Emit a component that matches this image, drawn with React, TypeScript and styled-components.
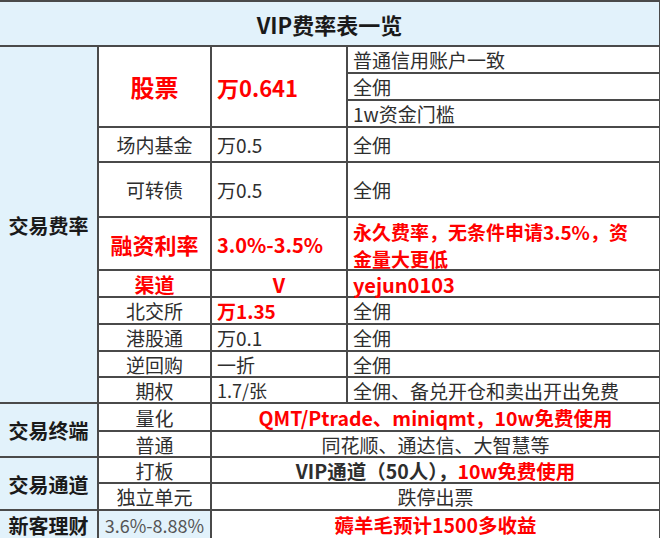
import styled, { createGlobalStyle } from "styled-components";

const GlobalStyle = createGlobalStyle`
  html, body {
    margin: 0;
    padding: 0;
    background: #ffffff;
  }
  body {
    font-family: "Noto Sans CJK SC", "Noto Sans", sans-serif;
  }
`;

const BLUE = "#e2f2fb";
const RED = "#ff0000";
const INK = "#2e2e2e";

const Table = styled.div`
  width: 659px;
  display: grid;
  grid-template-columns: 97px 111px 134px 1fr;
  grid-template-rows: 43px 25px 25px 25px 33px 53px 51px 25px 25px 25px 24px 24px 26px 24px 24px 25px 27px;
  gap: 2px;
  background: #4a4a4a;
  border-top: 2px solid #4a4a4a;
  border-right: 2px solid #4a4a4a;
`;

type Align = "left" | "center";

const Cell = styled.div<{
  $align?: Align;
  $blue?: boolean;
  $red?: boolean;
  $bold?: boolean;
  $size?: number;
  $muted?: boolean;
}>`
  display: flex;
  align-items: center;
  justify-content: ${(p) => (p.$align === "left" ? "flex-start" : "center")};
  padding: ${(p) => (p.$align === "left" ? "2px 0 0 5px" : "2px 0 0 0")};
  background: ${(p) => (p.$blue ? BLUE : "#ffffff")};
  color: ${(p) => (p.$red ? RED : p.$muted ? "#555555" : INK)};
  font-weight: ${(p) => (p.$bold ? 700 : 400)};
  font-size: ${(p) => p.$size ?? 19}px;
  line-height: 1.2;
  white-space: nowrap;
  overflow: visible;
`;

const Title = styled(Cell)`
  grid-column: 1 / -1;
  font-size: 22px;
  font-weight: 700;
  color: #1a1a1a;
`;

const Section = styled(Cell)<{ $rows: string }>`
  grid-column: 1;
  grid-row: ${(p) => p.$rows};
  font-size: 20px;
  font-weight: 700;
  color: #1a1a1a;
`;

const Wide = styled(Cell)`
  grid-column: 3 / 5;
  font-size: ${(p) => (p.$bold ? 19.5 : p.$size ?? 19)}px;
`;

const LastWide = styled(Wide)`
  padding: 0;
  line-height: 1;
`;

const Wrapped = styled(Cell)`
  white-space: normal;
  line-height: 27px;
`;

const Red = styled.span`
  color: ${RED};
`;

export default function App() {
  return (
    <>
      <GlobalStyle />
      <Table>
        <Title $blue>VIP费率表一览</Title>

        <Section $blue $rows="2 / 13">交易费率</Section>
        <Cell style={{ gridRow: "2 / 5" }} $red $bold $size={24}>
          股票
        </Cell>
        <Cell style={{ gridRow: "2 / 5" }} $align="left" $red $bold $size={22}>
          万0.641
        </Cell>
        <Cell $align="left">普通信用账户一致</Cell>
        <Cell $align="left">全佣</Cell>
        <Cell $align="left">1w资金门槛</Cell>

        <Cell>场内基金</Cell>
        <Cell $align="left">万0.5</Cell>
        <Cell $align="left">全佣</Cell>

        <Cell>可转债</Cell>
        <Cell $align="left">万0.5</Cell>
        <Cell $align="left">全佣</Cell>

        <Cell $red $bold $size={22}>
          融资利率
        </Cell>
        <Cell $align="left" $red $bold $size={20}>
          3.0%-3.5%
        </Cell>
        <Wrapped $align="left" $red $bold>
          永久费率，无条件申请3.5%，资
          <br />
          金量大更低
        </Wrapped>

        <Cell $red $bold $size={20}>
          渠道
        </Cell>
        <Cell $red $bold $size={20}>
          V
        </Cell>
        <Cell $align="left" $red $bold $size={20}>
          yejun0103
        </Cell>

        <Cell>北交所</Cell>
        <Cell $align="left" $red $bold>
          万1.35
        </Cell>
        <Cell $align="left">全佣</Cell>

        <Cell>港股通</Cell>
        <Cell $align="left">万0.1</Cell>
        <Cell $align="left">全佣</Cell>

        <Cell>逆回购</Cell>
        <Cell $align="left">一折</Cell>
        <Cell $align="left">全佣</Cell>

        <Cell>期权</Cell>
        <Cell $align="left" $size={18}>
          1.7/张
        </Cell>
        <Cell $align="left">全佣、备兑开仓和卖出开出免费</Cell>

        <Section $blue $rows="13 / 15">交易终端</Section>
        <Cell>量化</Cell>
        <Wide $red $bold>
          QMT/Ptrade、miniqmt，10w免费使用
        </Wide>
        <Cell>普通</Cell>
        <Wide>同花顺、通达信、大智慧等</Wide>

        <Section $blue $rows="15 / 17">交易通道</Section>
        <Cell>打板</Cell>
        <Wide $bold>
          VIP通道（50人），<Red>10w免费使用</Red>
        </Wide>
        <Cell>独立单元</Cell>
        <Wide>跌停出票</Wide>

        <Section $blue $rows="17 / 18">新客理财</Section>
        <Cell $blue $muted $size={18}>
          3.6%-8.88%
        </Cell>
        <LastWide $red $bold>
          薅羊毛预计1500多收益
        </LastWide>
      </Table>
    </>
  );
}
